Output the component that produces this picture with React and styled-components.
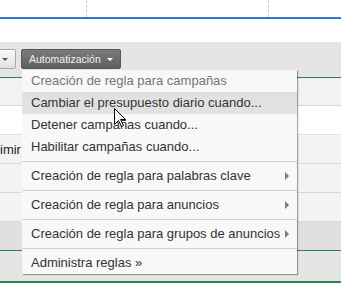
import React from "react";
import styled, { createGlobalStyle } from "styled-components";

const GlobalStyle = createGlobalStyle`
  html, body { margin: 0; padding: 0; background: #fff; }
  body { font-family: "Liberation Sans", Arial, sans-serif; }
`;

const Page = styled.div`
  position: relative;
  width: 341px;
  height: 298px;
  overflow: hidden;
  background: #fff;
`;

const TopStrip = styled.div`
  display: grid;
  grid-template-columns: 87px 182px 1fr;
  height: 17px;
`;

const TopCell = styled.div`
  border-right: ${(p) => (p.$last ? "none" : "1px dashed #cfcfcf")};
`;

const BlueBar = styled.div`
  height: 2px;
  background: linear-gradient(#3d8ad6, #1565bf);
`;

const Spacer = styled.div`
  height: 23px;
`;

const Toolbar = styled.div`
  box-sizing: border-box;
  height: 36px;
  background: #e5e5e5;
  border-bottom: 1px solid #208a4b;
  display: flex;
  align-items: flex-start;
  gap: 5px;
  padding-top: 7px;
`;

const SelectButton = styled.div`
  box-sizing: border-box;
  margin-left: -10px;
  width: 26px;
  height: 20px;
  border: 1px solid #a9a9a9;
  border-radius: 2px;
  background: linear-gradient(#f9f9f9, #e2e2e2);
  display: flex;
  align-items: center;
  justify-content: flex-end;
  padding-right: 7px;
`;

const DownArrow = styled.span`
  width: 0;
  height: 0;
  border-left: ${(p) => p.$size}px solid transparent;
  border-right: ${(p) => p.$size}px solid transparent;
  border-top: ${(p) => p.$size}px solid ${(p) => p.$color};
`;

const AutoButton = styled.div`
  box-sizing: border-box;
  width: 100px;
  height: 20px;
  border: 1px solid #575757;
  border-radius: 2px;
  background: linear-gradient(#7b7b7b, #5f5f5f);
  color: #eef2f9;
  font-size: 10.5px;
  display: flex;
  align-items: center;
  padding-left: 7px;
  gap: 6px;
`;

const Row = styled.div`
  box-sizing: border-box;
  height: ${(p) => p.$h}px;
  background: ${(p) => p.$bg};
  border-bottom: 1px solid ${(p) => p.$line || "#d8d8d8"};
  display: flex;
  align-items: center;
  font-size: 13px;
  color: #222;
`;

const Footer = styled.div`
  height: 30px;
  background: #e5e5e5;
  border-bottom: 2px solid #208a4b;
`;

const Menu = styled.div`
  position: absolute;
  left: 22px;
  top: 70px;
  width: 275px;
  background: #f8f8f8;
  box-shadow: 1px 1px 1px rgba(0, 0, 0, 0.35);
  font-size: 13px;
`;

const Group = styled.div`
  padding: ${(p) => (p.$first ? "0 0 3px" : p.$last ? "3px 0 0" : "3px 0")};
  border-top: ${(p) => (p.$first ? "none" : "1px solid #d2d2d2")};
`;

const Item = styled.div`
  height: 22px;
  line-height: 22px;
  padding: 0 8px 0 9px;
  display: flex;
  align-items: center;
  justify-content: space-between;
  white-space: nowrap;
  color: ${(p) => (p.$header ? "#757575" : "#333")};
  background: ${(p) => (p.$active ? "#e1e1e1" : "transparent")};
`;

const RightArrow = styled.span`
  width: 0;
  height: 0;
  border-top: 4px solid transparent;
  border-bottom: 4px solid transparent;
  border-left: 4px solid #7a7a7a;
`;

const Cursor = styled.svg`
  position: absolute;
  left: 114px;
  top: 108px;
`;

export default function App() {
  return (
    <Page>
      <GlobalStyle />
      <TopStrip>
        <TopCell />
        <TopCell />
        <TopCell $last />
      </TopStrip>
      <BlueBar />
      <Spacer />
      <Toolbar>
        <SelectButton>
          <DownArrow $size={3} $color="#555" />
        </SelectButton>
        <AutoButton>
          Automatización
          <DownArrow $size={3} $color="#fff" />
        </AutoButton>
      </Toolbar>
      <Row $h={28} $bg="#f2f2f2" />
      <Row $h={29} $bg="#ffffff" $line="#e2e2e2" />
      <Row $h={29} $bg="#f3f3f3">imir</Row>
      <Row $h={29} $bg="#f3f3f3" />
      <Row $h={29} $bg="#f3f3f3" />
      <Row $h={29} $bg="#e0e0e0" $line="#208a4b" />
      <Footer />

      <Menu>
        <Group $first>
          <Item $header>Creación de regla para campañas</Item>
          <Item $active>Cambiar el presupuesto diario cuando...</Item>
          <Item>Detener campañas cuando...</Item>
          <Item>Habilitar campañas cuando...</Item>
        </Group>
        <Group>
          <Item>
            Creación de regla para palabras clave
            <RightArrow />
          </Item>
        </Group>
        <Group>
          <Item>
            Creación de regla para anuncios
            <RightArrow />
          </Item>
        </Group>
        <Group>
          <Item>
            Creación de regla para grupos de anuncios
            <RightArrow />
          </Item>
        </Group>
        <Group $last>
          <Item>Administra reglas »</Item>
        </Group>
      </Menu>

      <Cursor width="13" height="20" viewBox="0 0 13 20">
        <path
          d="M0.5 0.5 L0.5 16.5 L4.5 12.5 L7.5 18.5 L9.5 17.5 L6.5 11.5 L11.5 11.5 Z"
          fill="#fff"
          stroke="#000"
          strokeWidth="1"
          strokeLinejoin="miter"
        />
      </Cursor>
    </Page>
  );
}
